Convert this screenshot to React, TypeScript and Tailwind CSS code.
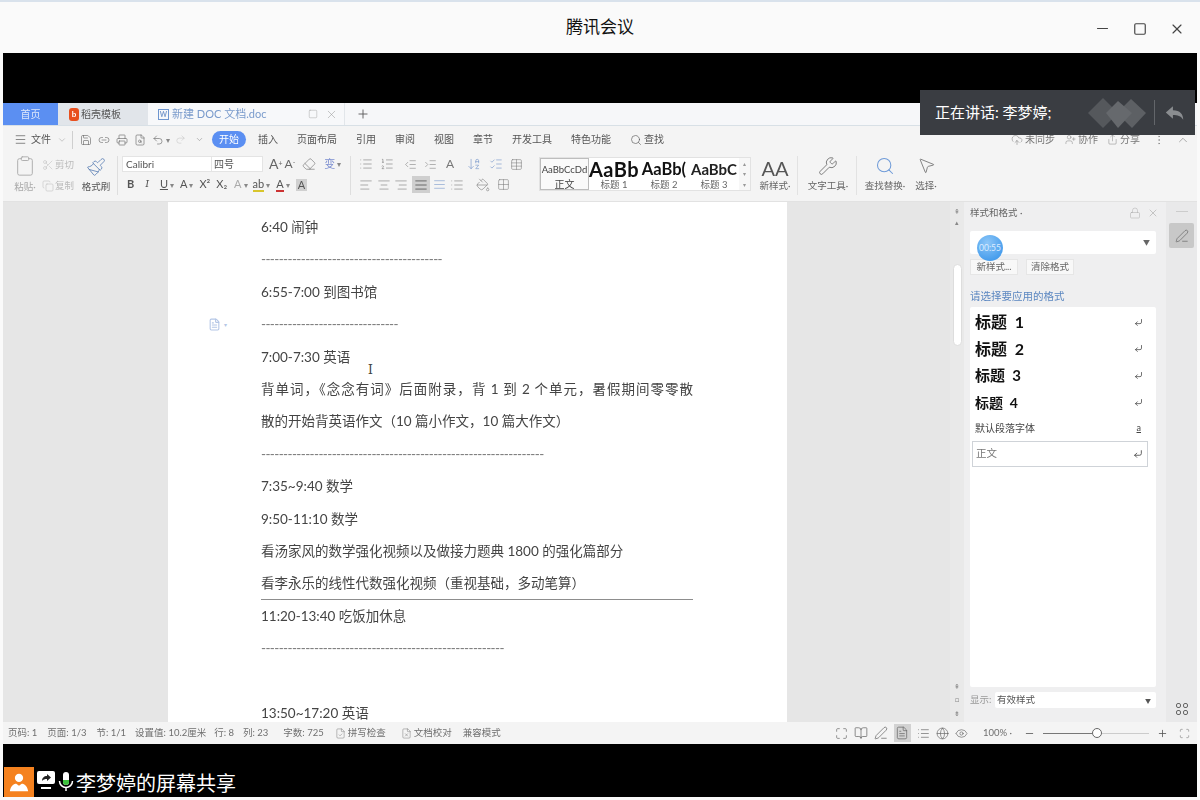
import React from "react";
import {
  AlignCenter, AlignJustify, AlignLeft, AlignRight, ArrowDownAZ, BookOpen, ChevronDown, ChevronUp, Clipboard, CloudUpload,
  Copy, CornerDownLeft, Eraser, FileCheck, FileText, FileX, Globe, Indent, List, ListOrdered, Lock, Maximize, Menu, Minus,
  MoreVertical, MousePointer2, Outdent, Paintbrush, PenLine, Plus, Printer, Redo2, Save, Scan, Scissors, Search, Share,
  Square, Table, Undo2, UserPlus, Wrench, X, Eye, PaintBucket, Grid2x2, Link2, FileSearch, ListChecks,
} from "lucide-react";

const Dot = () => <span className="ml-[2px] text-[8px] leading-none text-[#888]">▾</span>;

const docLines: { text: string; width?: number; justify?: boolean; dash?: boolean }[] = [
  { text: "6:40 闹钟" },
  { text: "-".repeat(41), dash: true },
  { text: "6:55-7:00 到图书馆" },
  { text: "-".repeat(31), dash: true },
  { text: "7:00-7:30 英语" },
  { text: "背单词，《念念有词》后面附录，背 1 到 2 个单元，暑假期间零零散", width: 432, justify: true },
  { text: "散的开始背英语作文（10 篇小作文，10 篇大作文）" },
  { text: "-".repeat(64), dash: true },
  { text: "7:35~9:40 数学" },
  { text: "9:50-11:10 数学" },
  { text: "看汤家风的数学强化视频以及做接力题典 1800 的强化篇部分" },
  { text: "看李永乐的线性代数强化视频（重视基础，多动笔算）" },
  { text: "11:20-13:40 吃饭加休息" },
  { text: "-".repeat(55), dash: true },
  { text: "" },
  { text: "13:50~17:20 英语" },
];

const styleItems = [
  { label: "标题  1", cls: "h-[26px] text-[16px] font-bold text-[#111]" },
  { label: "标题  2", cls: "h-[27px] text-[16px] font-bold text-[#111]" },
  { label: "标题  3", cls: "h-[27px] text-[15px] font-bold text-[#111]" },
  { label: "标题  4", cls: "h-[26px] text-[14px] font-bold text-[#111]" },
];

function TabBar() {
  return (
    <div className="flex h-[23px] items-stretch border-b border-[#d8e0e6] bg-[#f6f7f9] text-[10px]">
      <div className="flex w-[55px] items-center justify-center bg-[#5b8ff2] text-[#dfe9fb]">首页</div>
      <div className="flex w-[90px] items-center gap-[2px] bg-[#e1e5ea] pl-[11px] text-[#555]">
        <span className="flex h-[13px] w-[10px] items-center justify-center rounded-[3px] bg-[#e8501f] text-[8px] font-bold text-white">b</span>
        稻壳模板
      </div>
      <div className="flex w-[196px] items-center bg-[#f7f8fa] pl-[10px] text-[11px] text-[#7a9bcc]">
        <span className="mr-[3px] flex h-[11px] w-[11px] items-center justify-center border border-[#6d95cf] text-[7px] font-bold">W</span>
        新建 DOC 文档.doc
        <span className="ml-auto mr-[6px] flex items-center gap-[7px] text-[#999]">
          <Square size={10} strokeWidth={1} />
          <X size={13} strokeWidth={1} />
        </span>
      </div>
      <div className="flex w-[36px] items-center justify-center border-l border-[#e2e6ea] text-[#555]">
        <Plus size={14} strokeWidth={1.5} />
      </div>
    </div>
  );
}

function MenuRow() {
  return (
    <div className="flex h-[27px] items-center text-[10px] text-[#555]">
      <Menu size={13} strokeWidth={1.25} className="ml-[11px]" />
      <span className="ml-[4px]">文件</span>
      <ChevronDown size={10} strokeWidth={1} className="ml-[6px] text-[#888]" />
      <span className="ml-[5px] h-[18px] w-px bg-[#cfcfcf]" />
      <div className="ml-[7px] flex items-center gap-[6px] text-[#666]">
        <Save size={12} strokeWidth={1.25} />
        <Link2 size={12} strokeWidth={1.25} />
        <Printer size={12} strokeWidth={1.25} />
        <FileSearch size={12} strokeWidth={1.25} />
        <Undo2 size={12} strokeWidth={1.25} />
      </div>
      <Dot />
      <Redo2 size={11} strokeWidth={1} className="ml-[5px] text-[#bbb]" />
      <ChevronDown size={9} strokeWidth={1.25} className="ml-[9px] text-[#777]" />
      <span className="ml-[8px] flex h-[17px] w-[34px] items-center justify-center rounded-full bg-[#5b8ff2] text-white">开始</span>
      <div className="ml-[12px] flex items-center gap-[19px]">
        <span>插入</span>
        <span>页面布局</span>
        <span>引用</span>
        <span>审阅</span>
        <span>视图</span>
        <span>章节</span>
        <span>开发工具</span>
        <span>特色功能</span>
        <span className="flex items-center gap-[2px]">
          <Search size={12} strokeWidth={1.25} />
          查找
        </span>
      </div>
      <div className="ml-auto flex items-center text-[#777]">
        <CloudUpload size={12} strokeWidth={1} />
        <span className="ml-[2px]">未同步</span>
        <UserPlus size={11} strokeWidth={1} className="ml-[10px]" />
        <span className="ml-[2px]">协作</span>
        <Share size={11} strokeWidth={1} className="ml-[9px]" />
        <span className="ml-[2px]">分享</span>
        <MoreVertical size={12} strokeWidth={1} className="ml-[13px]" />
        <ChevronUp size={14} strokeWidth={1} className="ml-[11px] mr-[7px]" />
      </div>
    </div>
  );
}

function Ribbon() {
  return (
    <div className="flex h-[48px] items-stretch pb-[3px] text-[9.5px] text-[#666]">
      <div className="ml-[6px] flex w-[32px] flex-col items-center text-[#aaa]">
        <Clipboard size={22} strokeWidth={1} className="mt-[2px]" />
        <span className="mt-[3px]">粘贴·</span>
      </div>
      <div className="ml-[1px] flex w-[34px] flex-col gap-[7px] pt-[5px] text-[#bbb]">
        <span className="flex items-center gap-[1px]"><Scissors size={12} strokeWidth={1} />剪切</span>
        <span className="flex items-center gap-[1px]"><Copy size={12} strokeWidth={1} />复制</span>
      </div>
      <div className="ml-[3px] flex w-[34px] flex-col items-center text-[#555]">
        <Paintbrush size={20} strokeWidth={1} className="mt-[4px] text-[#5b7fb5]" />
        <span className="mt-[3px]">格式刷</span>
      </div>
      <span className="my-[3px] ml-[4px] mr-[3px] w-px bg-[#dedede]" />

      <div className="ml-px flex w-[228px] flex-col gap-[4px] pt-[3px]">
        <div className="flex h-[16px] items-center">
          <div className="flex h-[16px] w-[141px] border border-[#e4e4e4] bg-white text-[10px] text-[#555]">
            <span className="flex w-[88px] items-center pl-[3px]">Calibri</span>
            <span className="flex flex-1 items-center border-l border-[#e4e4e4] pl-[2px]">四号</span>
          </div>
          <span className="ml-[6px] text-[14px] leading-none">A<sup className="text-[7px]">+</sup></span>
          <span className="ml-[2px] text-[12px] leading-none">A<sup className="text-[7px]">-</sup></span>
          <Eraser size={14} strokeWidth={1} className="ml-[7px]" />
          <span className="ml-[8px] text-[11px] text-[#7d8fd0]">变</span>
          <Dot />
        </div>
        <div className="flex h-[17px] items-center text-[11px] text-[#555]">
          <span className="ml-[5px] font-bold">B</span>
          <span className="ml-[11px] font-serif italic">I</span>
          <span className="ml-[11px] underline">U</span><Dot />
          <span className="ml-[6px]">A</span><Dot />
          <span className="ml-[6px]">X²</span>
          <span className="ml-[6px]">X₂</span>
          <span className="ml-[7px] text-[#aaa]">A</span><Dot />
          <span className="ml-[5px] border-b-2 border-[#d8c52c] leading-[12px]">ab</span><Dot />
          <span className="ml-[6px] border-b-2 border-[#c33] leading-[12px]">A</span><Dot />
          <span className="ml-[6px] bg-[#d0d0d0] px-[2px] leading-[12px]">A</span>
        </div>
      </div>
      <span className="my-[3px] w-px bg-[#dedede]" />

      <div className="ml-[8px] flex w-[180px] flex-col gap-[4px] pt-[3px] text-[#777]">
        <div className="flex h-[16px] items-center gap-[7px]">
          <List size={14} strokeWidth={1} />
          <ListOrdered size={14} strokeWidth={1} />
          <Outdent size={13} strokeWidth={1} className="ml-[3px]" />
          <Indent size={13} strokeWidth={1} />
          <span className="ml-[2px] text-[12px] leading-none">A</span>
          <ArrowDownAZ size={14} strokeWidth={1} className="ml-[6px] text-[#6a8ec6]" />
          <ListChecks size={14} strokeWidth={1} className="ml-[1px] text-[#6a8ec6]" />
          <Table size={13} strokeWidth={1} />
        </div>
        <div className="flex h-[17px] items-center gap-[3.5px]">
          <AlignLeft size={14} strokeWidth={1} />
          <AlignCenter size={14} strokeWidth={1} />
          <AlignRight size={14} strokeWidth={1} />
          <span className="flex h-[17px] w-[18px] items-center justify-center bg-[#cfcfcf] text-[#444]">
            <AlignJustify size={14} strokeWidth={1.25} />
          </span>
          <AlignJustify size={13} strokeWidth={1} className="text-[#6a8ec6]" />
          <List size={14} strokeWidth={1} />
          <PaintBucket size={14} strokeWidth={1} className="ml-[9px]" />
          <Grid2x2 size={13} strokeWidth={1} className="ml-[3px]" />
        </div>
      </div>

      <div className="mt-[4px] flex h-[34px] w-[212px] border border-[#e2e2e2] bg-white">
        <div className="flex w-[49px] flex-col items-center border border-[#bdbdbd] bg-[#fafafa] text-[#444]">
          <span className="mt-[4px] text-[9.5px] leading-[14px]">AaBbCcDd</span>
          <span className="mt-[1px] text-[10px] leading-[12px]">正文</span>
        </div>
        <div className="flex w-[50px] flex-col items-center">
          <span className="h-[22px] text-[20px] font-bold leading-[22px] tracking-[0.5px] whitespace-nowrap text-[#111]">AaBb</span>
          <span className="text-[9.5px] leading-[10px]">标题 1</span>
        </div>
        <div className="flex w-[50px] flex-col items-center">
          <span className="h-[22px] text-[16.5px] font-bold leading-[22px] whitespace-nowrap text-[#111]">AaBb(</span>
          <span className="text-[9.5px] leading-[10px]">标题 2</span>
        </div>
        <div className="flex w-[50px] flex-col items-center">
          <span className="h-[22px] text-[15px] font-bold leading-[22px] whitespace-nowrap text-[#222]">AaBbC</span>
          <span className="text-[9.5px] leading-[10px]">标题 3</span>
        </div>
        <div className="flex flex-1 flex-col items-center justify-around bg-[#f7f7f7] text-[6px] text-[#999]">
          <span>▴</span>
          <span>▾</span>
          <span>▾</span>
        </div>
      </div>

      <div className="ml-[2px] flex w-[44px] flex-col items-center">
        <span className="mt-[4px] h-[21px] text-[20px] leading-[22px] text-[#555]">AA</span>
        <span className="mt-[1px]">新样式·</span>
      </div>
      <span className="my-[3px] w-px bg-[#e2e2e2]" />
      <div className="ml-[7px] flex w-[46px] flex-col items-center">
        <Wrench size={20} strokeWidth={1} className="mt-[3px]" />
        <span className="mt-[3px]">文字工具·</span>
      </div>
      <span className="ml-[5px] my-[3px] w-px bg-[#e2e2e2]" />
      <div className="ml-[5px] flex w-[46px] flex-col items-center">
        <Search size={20} strokeWidth={1.25} className="mt-[3px] text-[#6f9bd8]" />
        <span className="mt-[3px]">查找替换·</span>
      </div>
      <div className="ml-[4px] flex w-[28px] flex-col items-center">
        <MousePointer2 size={19} strokeWidth={1} className="mt-[3px]" />
        <span className="mt-[4px]">选择·</span>
      </div>
    </div>
  );
}

function DocPage() {
  return (
    <div className="ml-[165px] h-full w-[619px] shrink-0 overflow-hidden bg-white pl-[93px] pt-[9px] text-[13.5px] text-[#444]">
      {docLines.map((l, i) => (
        <React.Fragment key={i}>
          <div
            className={`flex h-[32.4px] items-center whitespace-nowrap ${l.dash ? "tracking-[-0.6px] text-[#777]" : ""}`}
            style={l.width ? { width: l.width } : undefined}
          >
            {l.justify ? <span className="block w-full whitespace-normal [text-align:justify] [text-align-last:justify]">{l.text}</span> : l.text}
          </div>
          {i === 11 && <div className="-my-[0.5px] h-px w-[432px] bg-[#8d8d8d]" />}
        </React.Fragment>
      ))}
    </div>
  );
}

function StylePanel() {
  return (
    <div className="flex h-full w-[202px] shrink-0 flex-col bg-[#efeff0] pl-[6px] pr-[10px] text-[#666]">
      <div className="flex h-[22px] items-center text-[9.5px]">
        <span>样式和格式 ·</span>
        <Lock size={12} strokeWidth={1} className="ml-auto text-[#aaa]" />
        <X size={12} strokeWidth={1} className="ml-[6px] mr-[-3px] text-[#999]" />
      </div>
      <div className="mt-[7px] flex h-[23px] items-center justify-end rounded-[2px] bg-white pr-[6px] text-[7px] text-[#666]">▼</div>
      <div className="mt-[5px] flex gap-[8px] text-[9.5px]">
        <span className="flex h-[16px] w-[48px] items-center justify-center border border-[#e6e6e6] bg-[#f8f8f8]">新样式...</span>
        <span className="flex h-[16px] w-[48px] items-center justify-center border border-[#e6e6e6] bg-[#f8f8f8]">清除格式</span>
      </div>
      <div className="mt-[14px] text-[10.5px] leading-[14px] text-[#5a86c0]">请选择要应用的格式</div>
      <div className="mt-[4px] h-[380px] w-[186px] rounded-[2px] bg-white pt-[2px]">
        {styleItems.map((s) => (
          <div key={s.label} className={`flex items-center justify-between whitespace-pre pl-[5px] pr-[13px] ${s.cls}`}>
            {s.label}
            <CornerDownLeft size={9} strokeWidth={2} className="text-[#444]" />
          </div>
        ))}
        <div className="flex h-[26px] items-center justify-between pl-[5px] pr-[15px] text-[10px] text-[#444]">
          默认段落字体
          <span className="text-[9px] underline">a</span>
        </div>
        <div className="ml-[2px] flex h-[26px] w-[176px] items-center justify-between border border-[#cfd3d8] pl-[3px] pr-[4px] text-[10.5px] text-[#777]">
          正文
          <CornerDownLeft size={10} strokeWidth={2} className="text-[#444]" />
        </div>
      </div>
      <div className="mt-[5px] flex h-[16px] w-[186px] items-center justify-between text-[9.5px]">
        <span className="text-[#999]">显示:</span>
        <span className="flex h-[16px] w-[161px] items-center justify-between rounded-[2px] bg-white pl-[2px] pr-[5px] text-[#555]">
          有效样式
          <span className="text-[6px]">▼</span>
        </span>
      </div>
    </div>
  );
}

function StatusBar() {
  return (
    <div className="flex h-[22px] items-center bg-[#f4f4f4] pl-[5px] text-[9.5px] text-[#6f6f6f]">
      <span>页码: 1</span>
      <span className="ml-[10px]">页面: 1/3</span>
      <span className="ml-[10px]">节: 1/1</span>
      <span className="ml-[9px]">设置值: 10.2厘米</span>
      <span className="ml-[8px]">行: 8</span>
      <span className="ml-[9px]">列: 23</span>
      <span className="ml-[15px]">字数: 725</span>
      <FileCheck size={11} strokeWidth={1} className="ml-[11px]" />
      <span className="ml-[2px]">拼写检查</span>
      <FileX size={11} strokeWidth={1} className="ml-[15px]" />
      <span className="ml-[2px]">文档校对</span>
      <span className="ml-[11px]">兼容模式</span>

      <div className="ml-auto flex items-center gap-[6px] text-[#666]">
        <Maximize size={13} strokeWidth={1.25} />
        <BookOpen size={14} strokeWidth={1.25} />
        <PenLine size={14} strokeWidth={1.25} />
        <span className="flex h-[18px] w-[17px] items-center justify-center bg-[#d2d2d2]"><FileText size={14} strokeWidth={1.25} /></span>
        <List size={13} strokeWidth={1.25} />
        <Globe size={13} strokeWidth={1.25} />
        <Eye size={13} strokeWidth={1.25} />
      </div>
      <span className="ml-[15px]">100% ·</span>
      <Minus size={11} strokeWidth={1.75} className="ml-[12px] text-[#555]" />
      <div className="ml-[8px] flex w-[106px] items-center">
        <span className="h-px w-[49px] bg-[#777]" />
        <span className="h-[10px] w-[10px] rounded-full border border-[#666] bg-white" />
        <span className="h-px flex-1 bg-[#ccc]" />
      </div>
      <Plus size={11} strokeWidth={1.75} className="ml-[8px] text-[#555]" />
      <Scan size={11} strokeWidth={1.25} className="ml-[11px] mr-[7px]" />
    </div>
  );
}

export default function App() {
  return (
    <div className="relative flex h-[800px] w-[1200px] flex-col overflow-hidden border-t-2 border-[#d9e2ec] bg-[#fafafa] [font-family:Lato,'Noto_Sans_CJK_SC',sans-serif]">
      {/* title bar */}
      <div className="relative flex h-[51px] shrink-0 items-center justify-center text-[17px] text-[#111]">
        <span className="-mt-[1px]">腾讯会议</span>
        <div className="absolute right-[15px] top-[18px] flex items-center gap-[22px] text-[#444]">
          <Minus size={17} strokeWidth={1.75} />
          <Square size={14} strokeWidth={2} />
          <X size={16} strokeWidth={1.75} />
        </div>
      </div>

      {/* shared screen */}
      <div className="mx-[3px] flex h-[744px] shrink-0 flex-col bg-black">
        <div className="h-[50px] shrink-0" />
        <div className="flex h-[641px] shrink-0 flex-col bg-[#f4f4f4] blur-[0.35px]">
          <TabBar />
          <MenuRow />
          <Ribbon />
          <div className="flex h-[521px] border-t border-[#e2e2e2] bg-[#e6e6e6]">
            <DocPage />
            <div className="ml-[163px] flex h-full w-[14px] shrink-0 flex-col items-center bg-[#e9e9e9] text-[7px] text-[#888]">
              <span className="mt-[4px]">⇞</span>
              <span>▴</span>
              <span className="mt-[37px] h-[82px] w-[9px] rounded-full border border-[#ddd] bg-white" />
              <span className="mt-auto">⇞</span>
              <span className="mt-[3px]">□</span>
              <span className="mb-[4px] mt-[3px]">⇟</span>
            </div>
            <StylePanel />
            <div className="flex h-full w-[31px] shrink-0 flex-col items-center bg-[#e9e9ea] text-[#555]">
              <span className="mt-[9px] h-px w-[12px] bg-[#ccc]" />
              <span className="mt-[11px] flex h-[25px] w-[25px] items-center justify-center rounded-[2px] bg-[#c8c8c8]">
                <PenLine size={14} strokeWidth={1} />
              </span>
              <span className="mb-[7px] mt-auto grid grid-cols-2 gap-[2px]">
                <span className="h-[5px] w-[5px] rounded-[2px] border border-[#666]" />
                <span className="h-[5px] w-[5px] rounded-[2px] border border-[#666]" />
                <span className="h-[5px] w-[5px] rounded-[2px] border border-[#666]" />
                <span className="h-[5px] w-[5px] rounded-[2px] border border-[#666]" />
              </span>
            </div>
          </div>
          <StatusBar />
        </div>
        <div className="flex h-[53px] shrink-0 items-end pl-px">
          <span className="flex h-[30px] w-[30px] items-center justify-center bg-[#f5821f]">
            <svg viewBox="0 0 24 24" className="h-[22px] w-[22px] fill-white">
              <circle cx="12" cy="7.5" r="4.5" />
              <path d="M2 22c1-6 5-8 7-8l3 2 3-2c2 0 6 2 7 8z" />
            </svg>
          </span>
          <span className="mb-[4px] ml-[3px] flex h-[22px] flex-col items-center">
            <svg viewBox="0 0 18 20" className="h-[20px] w-[18px]">
              <rect x="0" y="0" width="18" height="13" rx="2" fill="#fff" />
              <path d="M5 10c0-3 2-5 5-5V3l4 3.5L10 10V8c-2 0-4 .5-5 2z" fill="#222" />
              <rect x="4" y="16" width="10" height="2" fill="#fff" />
            </svg>
          </span>
          <span className="mb-[4px] ml-[3px] h-[22px] w-[16px]">
            <svg viewBox="0 0 16 22" className="h-[22px] w-[16px]">
              <rect x="5" y="1" width="6" height="13" rx="3" fill="#fff" />
              <path d="M5 9h6v2a3 3 0 0 1-6 0z" fill="#3cc13c" />
              <path d="M1.5 10a6.5 6.5 0 0 0 13 0M8 17v3" stroke="#fff" strokeWidth="1.5" fill="none" />
            </svg>
          </span>
          <span className="ml-[2px] text-[20px] leading-[28px] text-white">李梦婷的屏幕共享</span>
        </div>
      </div>

      {/* speaker banner */}
      <div className="absolute left-[920px] top-[88px] flex h-[45px] w-[275px] items-center bg-[#3a3d42] pl-[15px] text-[15px] text-white">
        正在讲话: 李梦婷;
        <svg viewBox="0 0 58 30" className="ml-auto h-[30px] w-[58px]">
          <path d="M15 0l15 15-15 15L0 15z" fill="#55585c" />
          <path d="M29 15L43 1l15 14-14 15z" fill="#5d6064" />
          <path d="M18 15L30 3l14 12-14 15z" fill="#66696d" />
        </svg>
        <span className="ml-[8px] h-[25px] w-px bg-[#63666a]" />
        <svg viewBox="0 0 24 24" className="ml-[10px] mr-[11px] h-[19px] w-[19px] fill-[#8a8d90]">
          <path d="M10 4L1 12l9 8v-5c6 0 10 1 13 6 0-7-4-12-13-12z" />
        </svg>
      </div>

      {/* recording timer */}
      <div className="absolute left-[977px] top-[233px] flex h-[26px] w-[26px] items-center justify-center rounded-full bg-[radial-gradient(circle_at_40%_30%,#8cc6f8,#2f8fe8)] text-[8.5px] text-[#dcecff]">
        00:55
      </div>

      {/* gutter marker and text cursor */}
      <div className="absolute left-[208px] top-[316px] flex items-center gap-[3px] text-[#b4c6e6]">
        <FileText size={13} strokeWidth={2} />
        <span className="text-[6px]">▾</span>
      </div>
      <div className="absolute left-[368px] top-[360px] font-serif text-[14px] leading-[16px] text-[#444]">I</div>
    </div>
  );
}
